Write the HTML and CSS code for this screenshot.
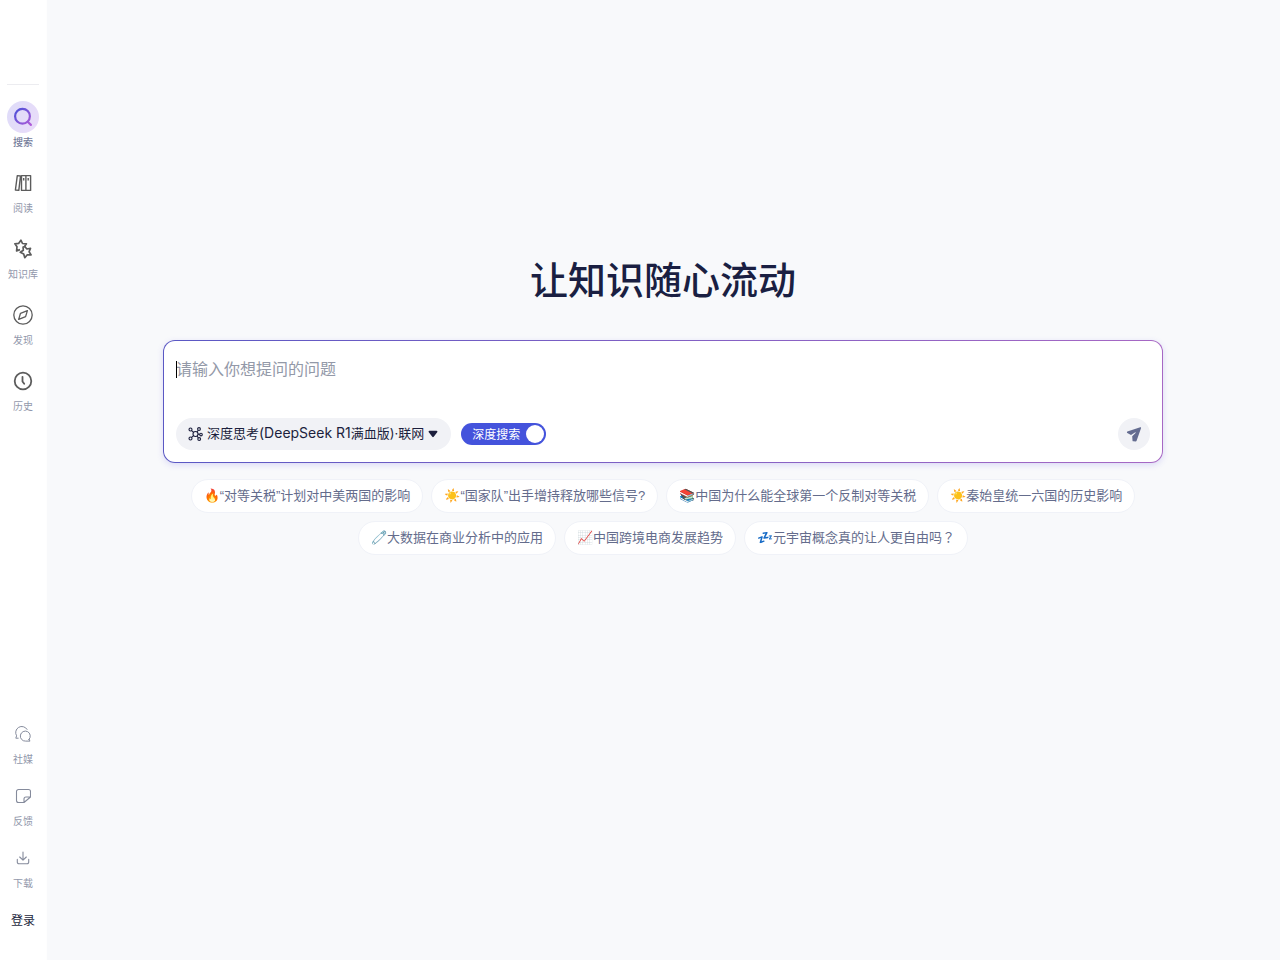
FILE: index.html
```html
<!DOCTYPE html>
<html lang="zh-CN">
<head>
<meta charset="utf-8">
<meta name="viewport" content="width=device-width, initial-scale=1">
<title>让知识随心流动</title>
<link rel="stylesheet" href="styles.css">
</head>
<body>
<div class="app">
  <aside class="sidebar">
    <div class="brand"></div>
    <nav class="nav">
      <a class="nav-item active" href="#search">
        <span class="nav-icon"><svg width="20" height="20" viewBox="0 0 20 20" fill="none" stroke="url(#lens)" stroke-width="2.2" stroke-linecap="round"><defs><linearGradient id="lens" x1="0" y1="0" x2="1" y2="1"><stop offset="0" stop-color="#4b50d8"/><stop offset="1" stop-color="#b05cd8"/></linearGradient></defs><path d="M9.5 1.9a7.4 7.4 0 1 1 0 14.8a7.4 7.4 0 1 1 0-14.8M14.7 14.7l3.2 3.2"/></svg></span>
        <span class="nav-label">搜索</span>
      </a>
      <a class="nav-item" href="#read">
        <span class="nav-icon"><svg width="18" height="18" viewBox="0 0 18 18" fill="none" stroke="#5c5c5c" stroke-width="1.4" stroke-linejoin="round"><path d="M3.3 1.6l3.2.4-1.7 14.4-3.4-.4zM7.5 1.6h4.4v14.8H7.5zM11.9 1.6h4.7v14.8h-4.7zM9.7 4v2.6M14.2 4v2.6"/></svg></span>
        <span class="nav-label">阅读</span>
      </a>
      <a class="nav-item" href="#library">
        <span class="nav-icon"><svg width="20" height="20" viewBox="0 0 20 20" fill="none" stroke="#5c5c5c" stroke-width="1.7" stroke-linejoin="round"><path d="M7 10.6l-3.4 1.3.4-4.2L1.9 4.8l3.7-.4L7.9 1.2l1.6 3.3 3.9.3-1.8 2.7"/><path d="M12 7.7l1.9 2.3 3.6-.6-1.4 3.4 2 3.1-3.8-.1-2.5 2.9-1.1-3.7-3.4-1.7 3-2-.2-3.2z"/></svg></span>
        <span class="nav-label">知识库</span>
      </a>
      <a class="nav-item" href="#discover">
        <span class="nav-icon"><svg width="20" height="20" viewBox="0 0 20 20" fill="none" stroke="#5c5c5c" stroke-width="1.3" stroke-linejoin="round"><circle cx="10" cy="10" r="9.2"/><path d="M14.4 5.6l-1.8 6-6.9 2.8L7.5 8.3z"/></svg></span>
        <span class="nav-label">发现</span>
      </a>
      <a class="nav-item" href="#history">
        <span class="nav-icon"><svg width="20" height="20" viewBox="0 0 20 20" fill="none" stroke="#5c5c5c" stroke-width="1.8" stroke-linecap="round" stroke-linejoin="round"><circle cx="10" cy="10" r="8.3"/><path d="M9.5 5.8v4.6l1.7 2.4"/></svg></span>
        <span class="nav-label">历史</span>
      </a>
    </nav>
    <nav class="nav nav-bottom">
      <a class="nav-item" href="#social">
        <span class="nav-icon"><svg width="16" height="16" viewBox="0 0 16 16" fill="none" stroke="#858b9c" stroke-width="1" stroke-linecap="round" stroke-linejoin="round"><path d="M12.1 3.4A6.1 6.1 0 0 0 1.6 9.8L.8 12.2h2.4M14.1 13.4l.9 1.7h-4.4a5 5 0 1 1 3.5-1.7z"/></svg></span>
        <span class="nav-label">社媒</span>
      </a>
      <a class="nav-item" href="#feedback">
        <span class="nav-icon"><svg width="16" height="16" viewBox="0 0 16 16" fill="none" stroke="#858b9c" stroke-width="1.1" stroke-linejoin="round"><path d="M9 14.5H3.5a2 2 0 0 1-2-2v-9a2 2 0 0 1 2-2h10a2 2 0 0 1 2 2V9zM9 14.5V11a2 2 0 0 1 2-2h4.5"/></svg></span>
        <span class="nav-label">反馈</span>
      </a>
      <a class="nav-item" href="#download">
        <span class="nav-icon"><svg width="14" height="14" viewBox="0 0 14 14" fill="none" stroke="#858b9c" stroke-width="1.1" stroke-linecap="round" stroke-linejoin="round"><path d="M7 1v8M3.7 6L7 9.2 10.3 6M1.3 8.4v2.8a1.5 1.5 0 0 0 1.5 1.5h8.4a1.5 1.5 0 0 0 1.5-1.5V8.4"/></svg></span>
        <span class="nav-label">下载</span>
      </a>
    </nav>
    <button class="login" type="button">登录</button>
  </aside>

  <main class="main">
    <h1 class="title">让知识随心流动</h1>
    <form class="ask">
      <div class="field">
        <textarea class="question" aria-label="问题" placeholder="请输入你想提问的问题"></textarea>
        <span class="caret"></span>
      </div>
      <div class="tools">
        <button class="model" type="button">
          <svg width="15" height="14" viewBox="0 0 15 14" fill="none" stroke="#1c1f3d" stroke-width="1.1"><circle cx="7.5" cy="7" r="2.5"/><circle cx="2.5" cy="2.5" r="1.5"/><circle cx="11" cy="2" r="1.4"/><circle cx="13" cy="7.6" r="1.3"/><circle cx="2.5" cy="11.5" r="1.5"/><circle cx="11.2" cy="12" r="1.4"/><path d="M3.6 3.6l2 1.7M10.3 3.2L9 5M10 7.1l1.7.3M3.6 10.4l2-1.7M9 9l1.4 1.8"/></svg>
          <span class="model-name">深度思考<span class="latin">(DeepSeek R1</span>满血版)·联网</span>
          <svg width="10" height="8" viewBox="0 0 10 8" fill="#1c1f3d"><path d="M1.5.8h7a.9.9 0 0 1 .7 1.5L5.7 6.7a.9.9 0 0 1-1.4 0L.8 2.3A.9.9 0 0 1 1.5.8z"/></svg>
        </button>
        <label class="deep"><span class="deep-name">深度搜索</span><input class="deep-knob" type="checkbox" checked></label>
        <button class="send" type="submit" aria-label="发送">
          <svg width="16" height="16" viewBox="0 0 16 16" fill="#646c90"><path d="M14.2 1.2L1.4 5.6a.8.8 0 0 0-.1 1.4l3.7 1.9 3.9-2.5c.6-.3 1 .3.6.7L6.2 10.2l.3 4.2c0 .8.5.9.9.9l2.3.1c.4 0 .7-.2.9-.6L15 2.2c.3-.7-.2-1.2-.8-1z"/></svg>
        </button>
      </div>
    </form>
    <div class="chips">
      <button class="chip" type="button">🔥“对等关税”计划对中美两国的影响</button>
      <button class="chip" type="button">☀️“国家队”出手增持释放哪些信号?</button>
      <button class="chip" type="button">📚中国为什么能全球第一个反制对等关税</button>
      <button class="chip" type="button">☀️秦始皇统一六国的历史影响</button>
      <button class="chip" type="button">🧷大数据在商业分析中的应用</button>
      <button class="chip" type="button">📈中国跨境电商发展趋势</button>
      <button class="chip" type="button">💤元宇宙概念真的让人更自由吗<span class="wide-mark" lang="zh-TW">？</span></button>
    </div>
  </main>
</div>
</body>
</html>
```
FILE: styles.css
```css
* { box-sizing: border-box; }
body {
  margin: 0;
  background: #f8f9fb;
  color: #1c1f3d;
  font-family: "Liberation Sans", "Noto Sans CJK SC", sans-serif;
}
button, textarea { font-family: inherit; }
button { border: 0; padding: 0; cursor: pointer; }
svg { display: block; flex: none; }

.app { display: flex; min-height: 100vh; }

.sidebar {
  width: 47px;
  flex: none;
  display: flex;
  flex-direction: column;
  align-items: center;
  padding-bottom: 29px;
  border-right: 1px solid #fefefe;
  background: #fff;
}
.brand {
  width: 32px;
  height: 85px;
  margin-bottom: 16px;
  border-bottom: 1px solid #ececf0;
}
.nav { display: flex; flex-direction: column; gap: 14px; }
.nav-bottom { gap: 10px; margin-top: auto; margin-bottom: 17px; }
.nav-item {
  display: flex;
  flex-direction: column;
  align-items: center;
  color: #9298ab;
  text-decoration: none;
}
.nav-icon {
  width: 32px;
  height: 32px;
  border-radius: 50%;
  display: flex;
  align-items: center;
  justify-content: center;
}
.nav-label { font-size: 10px; line-height: 20px; }
.active { color: #747b9a; }
.active .nav-label { font-weight: 500; }
.active .nav-icon { background: linear-gradient(120deg, #dedcf9, #eadcf9); }
.login { background: none; color: #1c1f3d; font-size: 12px; line-height: 20px; }

.main {
  flex: 1;
  min-width: 0;
  display: flex;
  flex-direction: column;
  align-items: center;
  padding: 257px 25px 24px 24px;
}
.title { margin: 0 0 35px; font-size: 38px; line-height: 48px; font-weight: 500; color: #1a1f42; }

.ask {
  width: 100%;
  max-width: 1000px;
  padding: 12px;
  border: 1px solid transparent;
  border-radius: 12px;
  background: linear-gradient(#fff, #fff) padding-box, linear-gradient(90deg, #5a58c4, #a768c4) border-box;
  box-shadow: 0 2px 6px rgba(90, 80, 230, 0.18);
}
.field { position: relative; }
.question {
  display: block;
  width: 100%;
  height: 65px;
  padding: 5px 0;
  border: 0;
  outline: 0;
  resize: none;
  background: transparent;
  color: #1c1f3d;
  font-size: 16px;
  line-height: 24px;
}
.question::placeholder { color: #9399a8; }
.caret { position: absolute; left: 0; top: 8px; width: 1px; height: 17px; background: #000; }

.tools { display: flex; align-items: center; gap: 10px; }
.model {
  display: flex;
  align-items: center;
  gap: 4px;
  height: 32px;
  padding: 0 13px 0 12px;
  border-radius: 16px;
  background: #f1f2f6;
  color: #1c1f3d;
  font-family: "Inter", "Noto Sans CJK SC", sans-serif;
  font-size: 13px;
}
.model-name { padding-bottom: 3px; }
.latin { font-size: 14px; }
.deep {
  display: flex;
  align-items: center;
  gap: 6px;
  height: 22px;
  padding: 0 2px 0 11px;
  border-radius: 11px;
  background: #4453dc;
  color: #fff;
  font-size: 12px;
  cursor: pointer;
}
.deep-name { padding-bottom: 2px; }
.deep-knob { appearance: none; width: 18px; height: 18px; margin: 0; border-radius: 50%; background: #fff; }
.send {
  display: flex;
  align-items: center;
  justify-content: center;
  width: 32px;
  height: 32px;
  margin-left: auto;
  border-radius: 50%;
  background: #f1f2f6;
}

.chips {
  display: flex;
  flex-wrap: wrap;
  justify-content: center;
  gap: 8px;
  width: 100%;
  max-width: 1000px;
  margin-top: 16px;
}
.chip {
  height: 34px;
  padding: 0 12px 3px;
  border: 1px solid #f0f2f8;
  border-radius: 17px;
  background: #fff;
  color: #646c8c;
  font-size: 13px;
  white-space: nowrap;
}
.wide-mark { font-family: "Noto Sans CJK TC", sans-serif; }
```
